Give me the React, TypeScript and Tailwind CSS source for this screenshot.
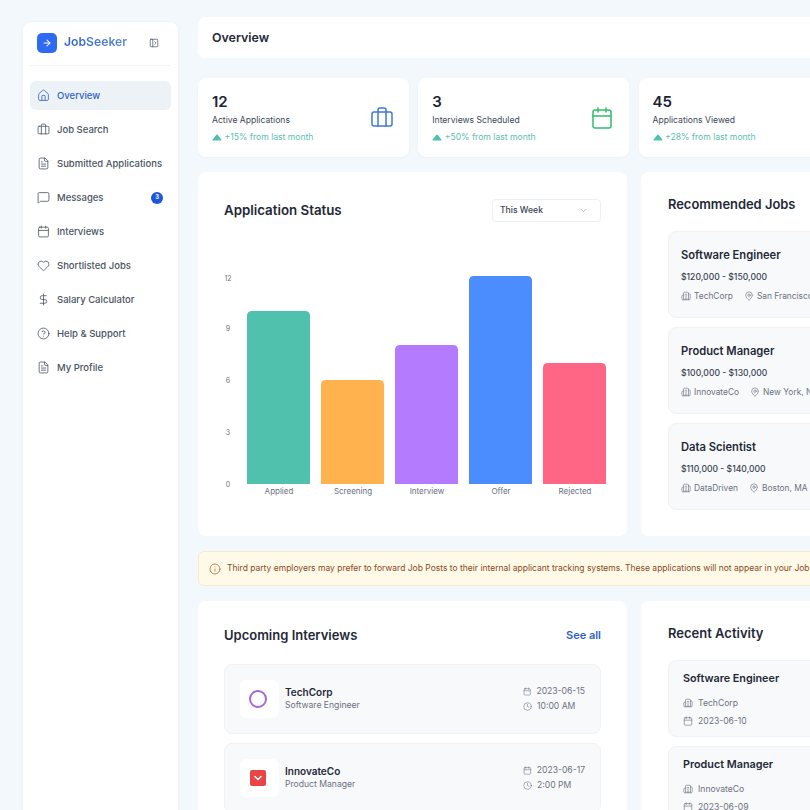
import {
  ArrowRight,
  Briefcase,
  Building2,
  Calendar,
  ChevronDown,
  CircleHelp,
  Clock,
  DollarSign,
  FileText,
  Heart,
  House,
  Info,
  MapPin,
  MessageSquare,
  PanelLeftOpen,
} from "lucide-react";

const navItems = [
  { label: "Overview", icon: House, active: true },
  { label: "Job Search", icon: Briefcase },
  { label: "Submitted Applications", icon: FileText },
  { label: "Messages", icon: MessageSquare, badge: 3 },
  { label: "Interviews", icon: Calendar },
  { label: "Shortlisted Jobs", icon: Heart },
  { label: "Salary Calculator", icon: DollarSign },
  { label: "Help & Support", icon: CircleHelp },
  { label: "My Profile", icon: FileText },
];

const jobs = [
  { title: "Software Engineer", salary: "$120,000 - $150,000", company: "TechCorp", location: "San Francisco, CA" },
  { title: "Product Manager", salary: "$100,000 - $130,000", company: "InnovateCo", location: "New York, NY" },
  { title: "Data Scientist", salary: "$110,000 - $140,000", company: "DataDriven", location: "Boston, MA" },
];

const bars = [
  { label: "Applied", x: 23, top: 311, color: "#4fc1ad" },
  { label: "Screening", x: 97, top: 380, color: "#ffb24d" },
  { label: "Interview", x: 171, top: 345, color: "#b57bff" },
  { label: "Offer", x: 245, top: 276, color: "#4b8dff" },
  { label: "Rejected", x: 319, top: 363, color: "#ff6685" },
];

function TrendIcon() {
  return (
    <svg width="10" height="7" viewBox="0 0 10 7" className="shrink-0">
      <path d="M5 0.6 Q5.6 0.6 6 1.2 L9.4 5.4 Q9.9 6.4 8.8 6.4 L1.2 6.4 Q0.1 6.4 0.6 5.4 L4 1.2 Q4.4 0.6 5 0.6Z" fill="#4fc1ad" />
    </svg>
  );
}

function StatCard({ value, label, trend, icon }: { value: string; label: string; trend: string; icon?: React.ReactNode }) {
  return (
    <div className="flex h-[79px] w-[210.5px] shrink-0 items-center justify-between rounded-lg bg-white pl-[14px] pr-[15px] shadow-[0_1px_3px_rgba(30,64,120,0.04)]">
      <div className="pt-[2px] whitespace-nowrap">
        <div className="text-[15px] font-semibold leading-[18px] text-[#1b2433]">{value}</div>
        <div className="mt-[2px] text-[8.6px] leading-[14px] text-[#3d4757]">{label}</div>
        <div className="mt-[4px] flex items-center gap-[2.5px] text-[8.6px] leading-[13px] text-[#5cc0ae]">
          <TrendIcon />
          <span>{trend}</span>
        </div>
      </div>
      {icon}
    </div>
  );
}

function StatusChart() {
  return (
    <svg width="390" height="232" viewBox="0 0 390 232" className="mt-[42px] block">
      {[
        ["12", 278],
        ["9", 328],
        ["6", 380],
        ["3", 432],
        ["0", 484],
      ].map(([tick, y]) => (
        <text key={tick} x="4" y={Number(y) - 261} textAnchor="middle" fontSize="7" fill="#6b7280">
          {tick}
        </text>
      ))}
      {bars.map((b) => {
        const t = b.top - 264;
        const bottom = 220;
        return (
          <g key={b.label}>
            <path
              d={`M${b.x} ${bottom} V${t + 5} Q${b.x} ${t} ${b.x + 5} ${t} H${b.x + 58} Q${b.x + 63} ${t} ${b.x + 63} ${t + 5} V${bottom} Z`}
              fill={b.color}
            />
            <text x={b.x + 32} y="230" textAnchor="middle" fontSize="8" fill="#6b7280">
              {b.label}
            </text>
          </g>
        );
      })}
    </svg>
  );
}

function JobCard({ job }: { job: (typeof jobs)[number] }) {
  return (
    <div className="h-[87px] rounded-lg border border-[#f0f2f5] bg-[#f8f9fb] pl-[12px] pt-[15px]">
      <div className="text-[11.2px] font-semibold leading-[16px] text-[#1f2937]">{job.title}</div>
      <div className="mt-[8px] text-[8.6px] font-medium leading-[12px] text-[#374151]">{job.salary}</div>
      <div className="mt-[7px] flex items-center gap-[11px] whitespace-nowrap text-[8.4px] leading-[12px] text-[#6b7280]">
        <span className="flex items-center gap-[3px]">
          <Building2 size={10} strokeWidth={1.5} />
          {job.company}
        </span>
        <span className="flex items-center gap-[3px]">
          <MapPin size={10} strokeWidth={1.5} />
          {job.location}
        </span>
      </div>
    </div>
  );
}

function InterviewRow({ logo, company, role, date, time }: { logo: React.ReactNode; company: string; role: string; date: string; time: string }) {
  return (
    <div className="flex h-[70px] items-center justify-between rounded-lg border border-[#f0f2f5] bg-[#f8f9fb] pl-[15px] pr-[15px]">
      <div className="flex items-center gap-[6px]">
        <div className="flex h-[38px] w-[39px] items-center justify-center rounded-md bg-white pr-[3px]">{logo}</div>
        <div>
          <div className="text-[10px] font-semibold leading-[13px] text-[#1f2937]">{company}</div>
          <div className="text-[8.6px] leading-[13px] text-[#6b7280]">{role}</div>
        </div>
      </div>
      <div className="w-[62px] whitespace-nowrap text-[8.6px] leading-[15px] text-[#6b7280]">
        <div className="flex items-center gap-[5px]">
          <Calendar size={9} strokeWidth={1.5} />
          {date}
        </div>
        <div className="flex items-center gap-[5px]">
          <Clock size={9} strokeWidth={1.5} />
          {time}
        </div>
      </div>
    </div>
  );
}

function ActivityCard({ title, company, date }: { title: string; company: string; date: string }) {
  return (
    <div className="h-[77px] rounded-lg border border-[#f0f2f5] bg-[#f8f9fb] pl-[14px] pt-[10px]">
      <div className="text-[10.8px] font-semibold leading-[16px] text-[#1f2937]">{title}</div>
      <div className="mt-[10px] space-y-[6px] text-[8.6px] leading-[12px] text-[#6b7280]">
        <div className="flex items-center gap-[5px]">
          <Building2 size={10} strokeWidth={1.5} />
          {company}
        </div>
        <div className="flex items-center gap-[5px]">
          <Calendar size={10} strokeWidth={1.5} />
          {date}
        </div>
      </div>
    </div>
  );
}

export default function App() {
  return (
    <div className="flex h-[810px] w-[810px] gap-[20px] overflow-hidden bg-[#f3f8fc] pl-[23px] font-['Inter',sans-serif]">
      <aside className="mt-[22px] w-[155px] shrink-0 rounded-t-lg bg-white px-[7px] shadow-[0_1px_4px_rgba(30,64,120,0.05)]">
        <div className="flex h-[44px] items-center justify-between border-b border-[#f0f2f5] pb-[2px] pl-[7px] pr-[12px]">
          <div className="flex items-center gap-[7px]">
            <div className="flex h-[20px] w-[20px] items-center justify-center rounded-[5px] bg-[#2f6bf2]">
              <ArrowRight size={10} strokeWidth={2.5} className="text-white" />
            </div>
            <span className="bg-gradient-to-r from-[#2f62c4] to-[#5b8ad8] bg-clip-text text-[12.2px] font-semibold text-transparent">JobSeeker</span>
          </div>
          <PanelLeftOpen size={10} strokeWidth={1.75} className="text-[#4b5563]" />
        </div>
        <nav className="mt-[15px] flex flex-col gap-[5px]">
          {navItems.map((item) => {
            const Icon = item.icon;
            return (
              <div
                key={item.label}
                className={
                  item.active
                    ? "flex h-[29px] items-center gap-[7px] rounded-md bg-[#edf2f6] pl-[7px] text-[#2f62c4]"
                    : "flex h-[29px] items-center gap-[7px] rounded-md pl-[7px] text-[#4b5563]"
                }
              >
                <Icon size={13} strokeWidth={1.5} className="shrink-0" />
                <span className="whitespace-nowrap pt-[1px] text-[9.5px] font-medium">{item.label}</span>
                {item.badge && (
                  <span className="ml-auto mr-[8px] flex h-[12px] w-[12px] items-center justify-center rounded-full bg-[#1d56d8] text-[6.5px] font-semibold text-white">
                    {item.badge}
                  </span>
                )}
              </div>
            );
          })}
        </nav>
      </aside>

      <main className="w-[873px] shrink-0 pt-[17px]">
        <div className="flex h-[41px] items-center rounded-lg bg-white pl-[14px] pt-[1px] text-[12.4px] font-semibold text-[#1f2937]">Overview</div>

        <div className="mt-[20px] flex gap-[9.75px]">
          <StatCard value="12" label="Active Applications" trend="+15% from last month" icon={<Briefcase size={24} strokeWidth={1.5} className="text-[#3f78d8]" />} />
          <StatCard value="3" label="Interviews Scheduled" trend="+50% from last month" icon={<Calendar size={24} strokeWidth={1.5} className="text-[#2fbf6b]" />} />
          <StatCard value="45" label="Applications Viewed" trend="+28% from last month" />
        </div>

        <div className="mt-[15px] grid grid-cols-[429px_430px] gap-[14px]">
          <section className="h-[364px] rounded-lg bg-white pl-[26px] pr-[26px] pt-[27px]">
            <div className="flex items-center justify-between">
              <h2 className="text-[13.3px] font-semibold text-[#1f2937]">Application Status</h2>
              <div className="flex h-[23px] w-[109px] items-center justify-between rounded border border-[#eceff3] pl-[7px] pr-[12px] text-[8.6px] font-medium text-[#374151]">
                This Week
                <ChevronDown size={9} className="text-[#9ca3af]" />
              </div>
            </div>
            <StatusChart />
          </section>

          <section className="h-[364px] rounded-lg bg-white px-[27px] pt-[23px]">
            <h2 className="text-[12.9px] font-semibold leading-[19px] text-[#1f2937]">Recommended Jobs</h2>
            <div className="mt-[17px] flex flex-col gap-[9px]">
              {jobs.map((job) => (
                <JobCard key={job.title} job={job} />
              ))}
            </div>
          </section>
        </div>

        <div className="mt-[15px] flex h-[35px] items-center gap-[6px] whitespace-nowrap rounded-md border border-[#f5ecd0] bg-[#fff9e8] pl-[10px] text-[8.5px] text-[#8a4a1c]">
          <Info size={12} strokeWidth={1.5} className="shrink-0 text-[#a8641f]" />
          Third party employers may prefer to forward Job Posts to their internal applicant tracking systems. These applications will not appear in your Job Seeker dashboard.
        </div>

        <div className="mt-[15px] grid grid-cols-[429px_430px] gap-[14px]">
          <section className="h-[300px] rounded-lg bg-white px-[26px] pt-[25px]">
            <div className="flex items-center justify-between">
              <h2 className="text-[13px] font-semibold leading-[19px] text-[#1f2937]">Upcoming Interviews</h2>
              <span className="text-[11px] font-semibold text-[#2f62c4]">See all</span>
            </div>
            <div className="mt-[19px] flex flex-col gap-[9px]">
              <InterviewRow
                logo={<span className="block h-[18px] w-[18px] rounded-full border-2 border-[#a56ad6]" />}
                company="TechCorp"
                role="Software Engineer"
                date="2023-06-15"
                time="10:00 AM"
              />
              <InterviewRow
                logo={
                  <span className="flex h-[16px] w-[16px] items-center justify-center rounded-[2px] bg-[#ea4545]">
                    <ChevronDown size={12} strokeWidth={3} className="text-white" />
                  </span>
                }
                company="InnovateCo"
                role="Product Manager"
                date="2023-06-17"
                time="2:00 PM"
              />
            </div>
          </section>

          <section className="h-[300px] rounded-lg bg-white px-[27px] pt-[23px]">
            <h2 className="text-[13px] font-semibold leading-[19px] text-[#1f2937]">Recent Activity</h2>
            <div className="mt-[17px] flex flex-col gap-[9px]">
              <ActivityCard title="Software Engineer" company="TechCorp" date="2023-06-10" />
              <ActivityCard title="Product Manager" company="InnovateCo" date="2023-06-09" />
            </div>
          </section>
        </div>
      </main>
    </div>
  );
}
